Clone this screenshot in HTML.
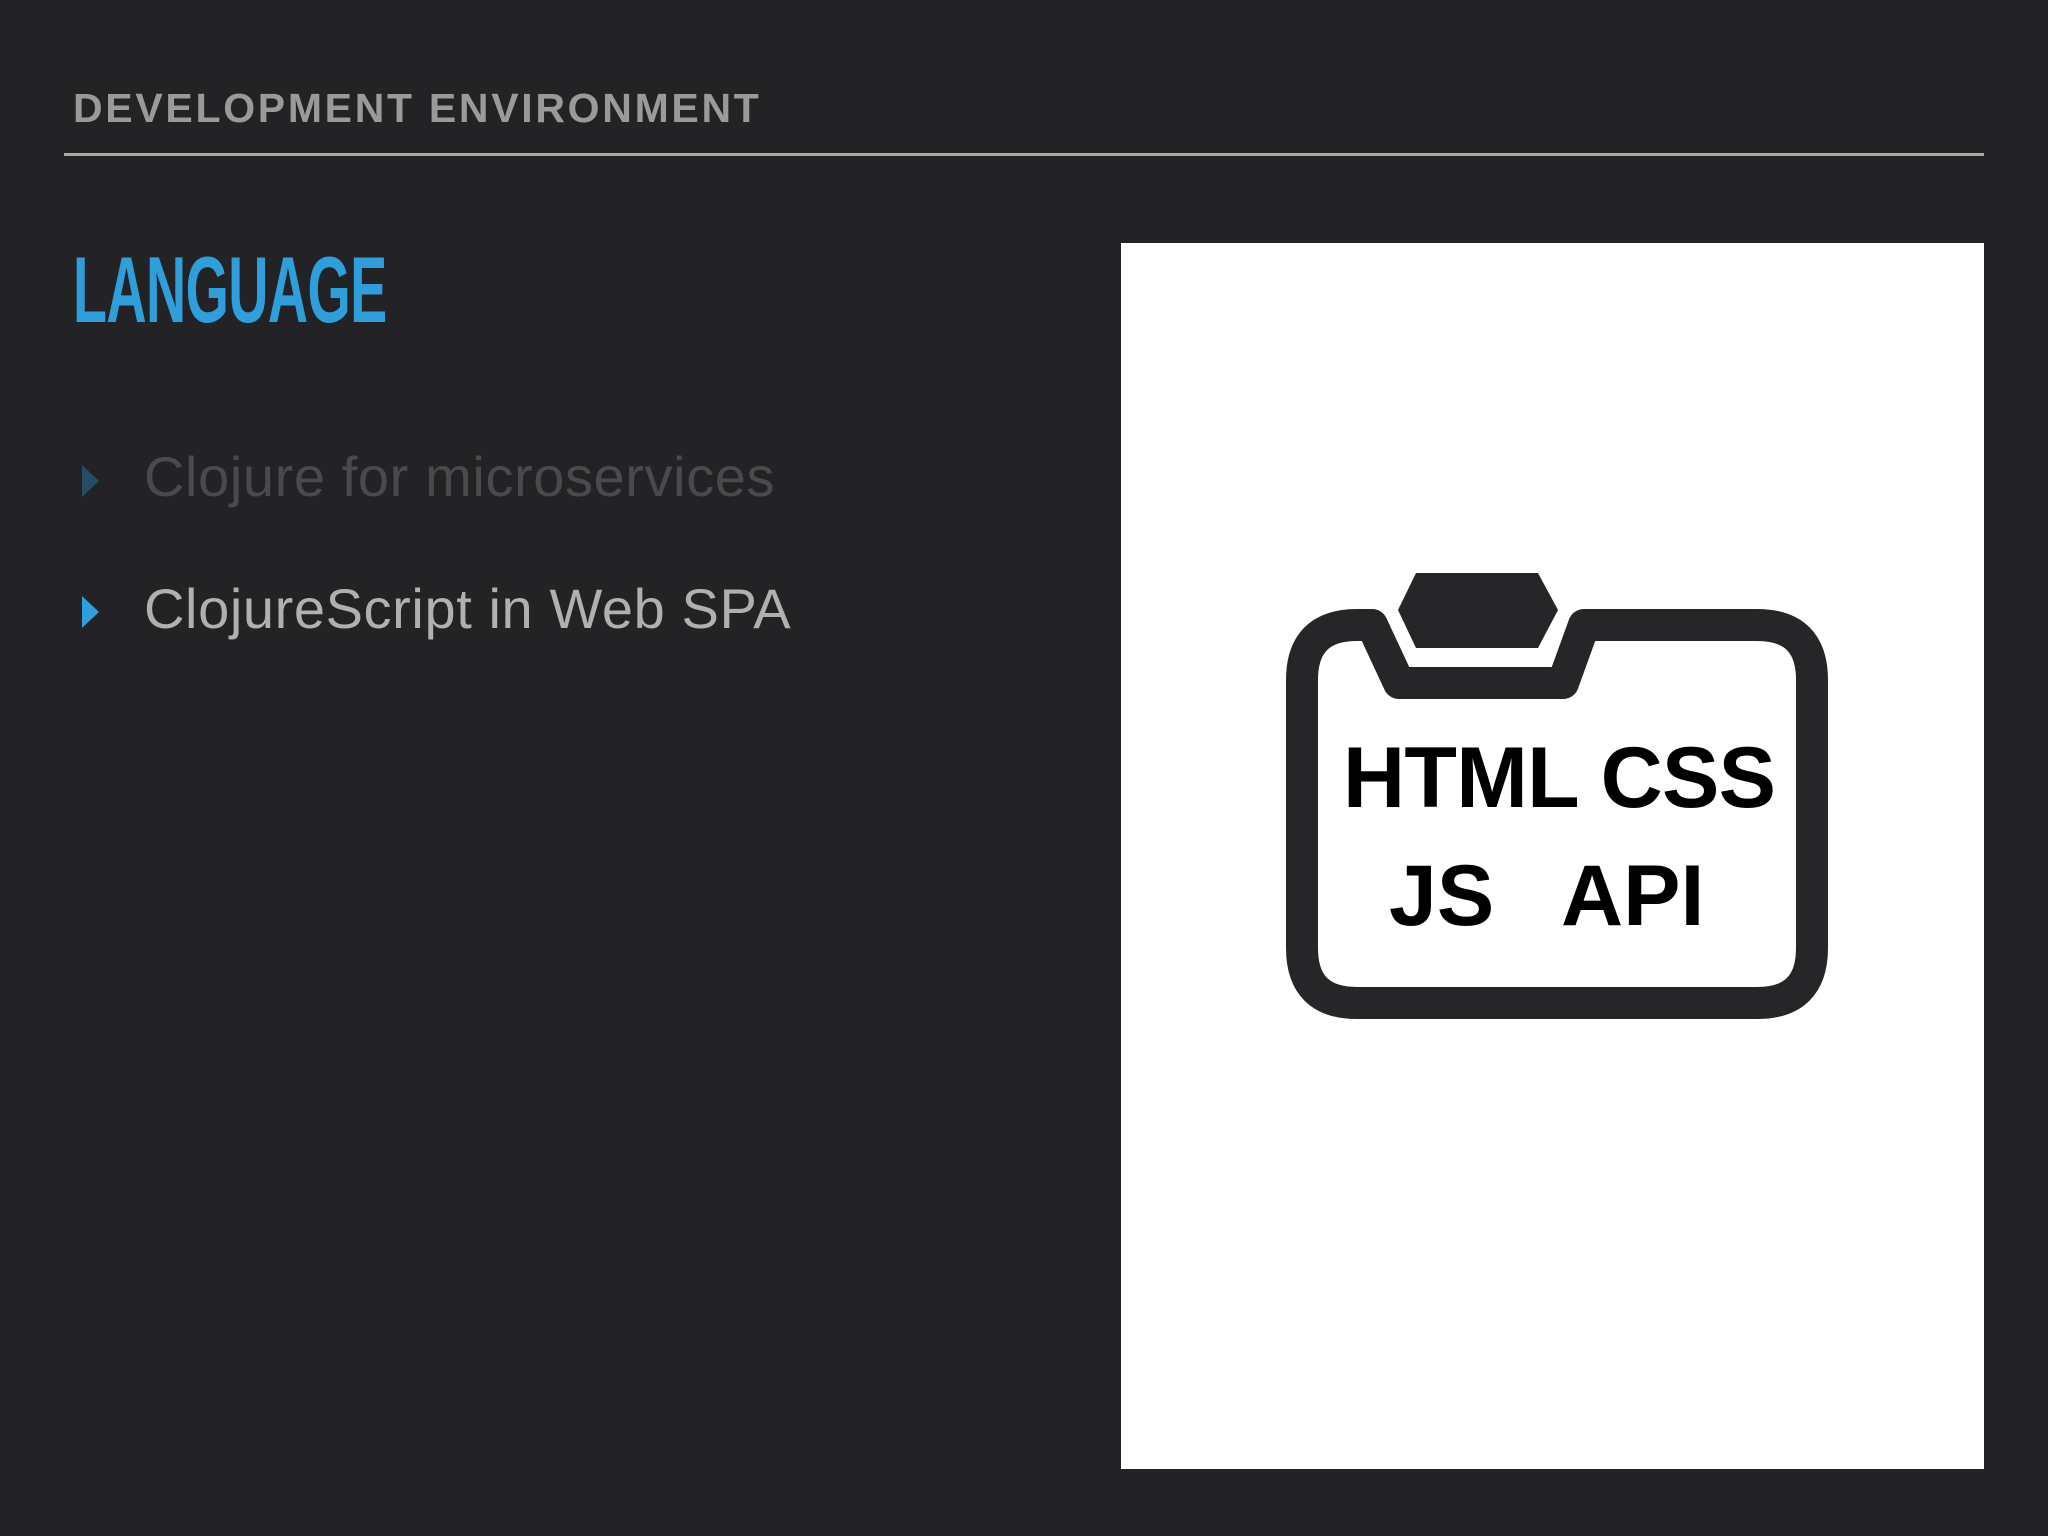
<!DOCTYPE html>
<html><head><meta charset="utf-8"><style>
html,body{margin:0;padding:0}
body{width:2048px;height:1536px;background:#232225;position:relative;overflow:hidden;font-family:"Liberation Sans",sans-serif}
.hdr{position:absolute;left:73px;top:85px;font-size:41px;font-weight:bold;letter-spacing:2.7px;color:#9a9a9a}
.line{position:absolute;left:64px;top:153px;width:1920px;height:3px;background:#a8a8a8}
.title{position:absolute;left:73px;top:236px;font-size:94px;font-weight:bold;color:#2f9fdc;transform:scaleX(0.592);transform-origin:left top;letter-spacing:-1px}
.b{position:absolute;left:144px;font-size:56px;letter-spacing:0.6px}
.tri{position:absolute;left:82px;width:0;height:0;border-top:16px solid transparent;border-bottom:16px solid transparent;border-left:17px solid #2f9fdc}
.panel{position:absolute;left:1121px;top:243px;width:863px;height:1226px;background:#fff}
</style></head><body>
<div class="hdr">DEVELOPMENT ENVIRONMENT</div>
<div class="line"></div>
<div class="title">LANGUAGE</div>
<div class="tri" style="top:465px;opacity:0.35"></div>
<div class="b" style="top:444px;color:#4a4a4c">Clojure for microservices</div>
<div class="tri" style="top:596px"></div>
<div class="b" style="top:576px;color:#b0b0b0">ClojureScript in Web SPA</div>
<div class="panel"></div>
<svg style="position:absolute;left:0;top:0" width="2048" height="1536">
<path d="M1357,625 L1372,625 L1399,683 L1563,683 L1584,625 L1757,625 Q1812,625 1812,680 L1812,948 Q1812,1003 1757,1003 L1357,1003 Q1302,1003 1302,948 L1302,680 Q1302,625 1357,625 Z" fill="#fff" stroke="#262528" stroke-width="32" stroke-linejoin="round"/>
<polygon points="1416,573 1538,573 1558,610 1538,648 1416,648 1398,610" fill="#262528"/>
<text x="1343" y="807" font-family="Liberation Sans,sans-serif" font-weight="bold" font-size="86" textLength="433" fill="#000">HTML CSS</text>
<text x="1389" y="925" font-family="Liberation Sans,sans-serif" font-weight="bold" font-size="86" fill="#000">JS</text>
<text x="1561" y="925" font-family="Liberation Sans,sans-serif" font-weight="bold" font-size="86" fill="#000">API</text>
</svg>
</body></html>
